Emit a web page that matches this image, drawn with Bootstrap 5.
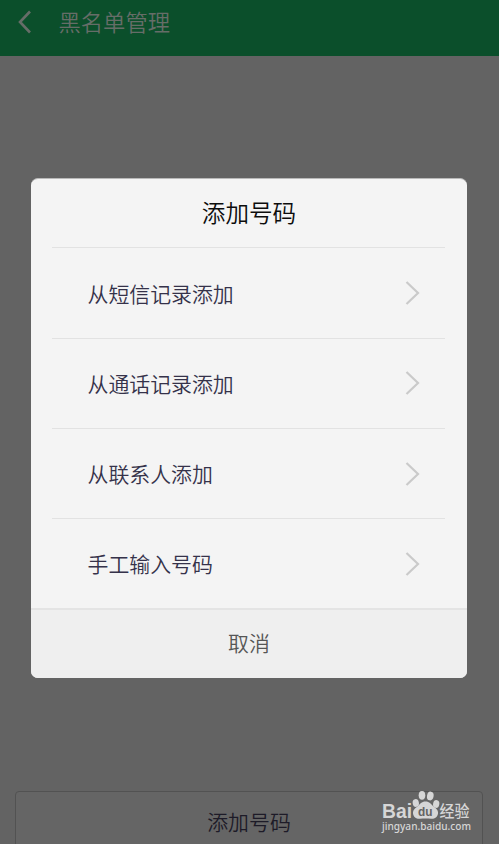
<!DOCTYPE html>
<html lang="zh-CN">
<head>
<meta charset="utf-8">
<meta name="viewport" content="width=device-width, initial-scale=1">
<title>黑名单管理</title>
<link href="https://cdn.jsdelivr.net/npm/bootstrap@5.3.0/dist/css/bootstrap.min.css" rel="stylesheet">
<style>
body{font-family:"Noto Sans CJK SC",sans-serif;background:#636363;height:844px;font-weight:350}
button{font-weight:350}
.topbar{height:56px;background:#0b4f2b;color:#666d68;padding:0 0 12px 18px;font-size:22.3px;line-height:1}
.topbar .page-name{margin-left:26.5px;padding-bottom:1px}
.add-btn{height:70px;margin:0 16px -17px 15px;border:1px solid #525252;border-radius:4px;background:#656565;color:#1d1b28;font-size:20.9px;line-height:1;padding:19px 0 0;flex:none}
.sheet-wrap{padding:178px 32px 0 31px}
.sheet{height:500px;border-radius:7px;background:#f4f4f4;overflow:hidden;border-top:1px solid #b9b9b9}
.sheet-title{height:69px;font-size:23.6px;line-height:1;color:#0c0c0c}
.choices{margin:0 22px 0 21px}
.choice{height:90.25px;border-top:1px solid #e2e2e2;padding:0 25px 0 35.5px;font-size:20.9px;line-height:1;color:#35324a}
.cancel{height:70px;background:#efefef;border:0;border-top:2px solid #e4e4e4;color:#565656;font-size:20.9px;line-height:1;padding-bottom:5px}
.brand-mark{right:27px;bottom:10px;width:92px;height:46px}
</style>
</head>
<body class="d-flex flex-column overflow-hidden position-relative">
<header class="topbar d-flex align-items-center">
  <svg width="14" height="24" viewBox="0 0 14 24" fill="none" stroke="currentColor" stroke-width="2.6"><path d="M12 1.5 2 12l10 10.5"/></svg>
  <span class="page-name">黑名单管理</span>
</header>
<main class="flex-grow-1"></main>
<button class="add-btn d-flex justify-content-center align-items-start">添加号码</button>

<div class="sheet-wrap position-absolute top-0 start-0 w-100">
  <div class="sheet d-flex flex-column" role="dialog">
    <div class="sheet-title d-flex align-items-center justify-content-center">添加号码</div>
    <div class="choices">
      <div class="choice d-flex align-items-center justify-content-between"><span>从短信记录添加</span><svg width="15" height="24" viewBox="0 0 15 24" fill="none" stroke="#cacaca" stroke-width="2.2"><path d="M1.5 1 13 12 1.5 23"/></svg></div>
      <div class="choice d-flex align-items-center justify-content-between"><span>从通话记录添加</span><svg width="15" height="24" viewBox="0 0 15 24" fill="none" stroke="#cacaca" stroke-width="2.2"><path d="M1.5 1 13 12 1.5 23"/></svg></div>
      <div class="choice d-flex align-items-center justify-content-between"><span>从联系人添加</span><svg width="15" height="24" viewBox="0 0 15 24" fill="none" stroke="#cacaca" stroke-width="2.2"><path d="M1.5 1 13 12 1.5 23"/></svg></div>
      <div class="choice d-flex align-items-center justify-content-between"><span>手工输入号码</span><svg width="15" height="24" viewBox="0 0 15 24" fill="none" stroke="#cacaca" stroke-width="2.2"><path d="M1.5 1 13 12 1.5 23"/></svg></div>
    </div>
    <button class="cancel w-100 d-flex align-items-center justify-content-center">取消</button>
  </div>
</div>

<svg class="brand-mark position-absolute" viewBox="380 788 92 46" fill="#d6d6d6">
  <text x="382" y="817.5" font-family="Liberation Sans, sans-serif" font-weight="700" font-size="20" textLength="30" lengthAdjust="spacingAndGlyphs">Bai</text>
  <ellipse cx="415.8" cy="803" rx="3.1" ry="3.9" transform="rotate(-12 415.8 803)"/>
  <ellipse cx="422" cy="795.3" rx="3.3" ry="4.4"/>
  <ellipse cx="430.3" cy="796" rx="3.3" ry="4.4" transform="rotate(10 430.3 796)"/>
  <ellipse cx="436.2" cy="804" rx="3.1" ry="3.9" transform="rotate(12 436.2 804)"/>
  <path d="M425.500 801.5c4 0 5.500 2.500 7.500 4.500 2.500 2 5.500 4 5 7.500-.5 4-3.500 5.500-7 5.200-3.700-.3-7.300-.3-11 0-3.500.3-6.500-1.200-7-5.200-.5-3.500 2.500-5.500 5-7.500 2-2 3.500-4.500 7.500-4.500z"/>
  <text x="418" y="816" font-family="Liberation Sans, sans-serif" font-weight="700" font-size="12" fill="#636363" textLength="14.5" lengthAdjust="spacingAndGlyphs">du</text>
  <text x="439.5" y="817" font-family="Noto Sans CJK SC, sans-serif" font-weight="500" font-size="15.5" textLength="30" lengthAdjust="spacingAndGlyphs">经验</text>
  <text x="382" y="829.5" font-family="Noto Sans, sans-serif" font-weight="500" font-size="10.3" textLength="89" lengthAdjust="spacingAndGlyphs">jingyan.baidu.com</text>
</svg>
<script src="https://cdn.jsdelivr.net/npm/bootstrap@5.3.0/dist/js/bootstrap.bundle.min.js"></script>
</body>
</html>
